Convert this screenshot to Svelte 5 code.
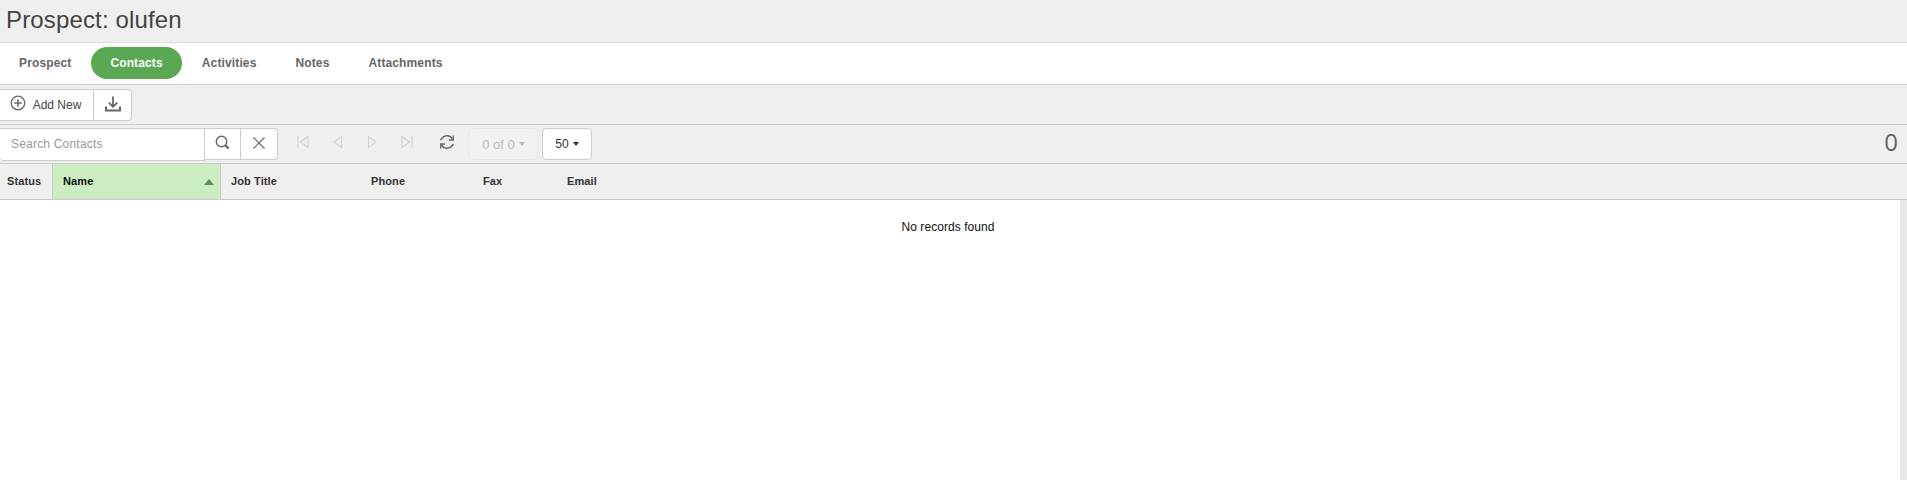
<script>
  const tabs = ['Prospect', 'Contacts', 'Activities', 'Notes', 'Attachments'];
  const cols = [
    { label: 'Status', cls: 'c-status' },
    { label: 'Name', cls: 'c-name' },
    { label: 'Job Title', cls: 'c-job' },
    { label: 'Phone', cls: 'c-phone' },
    { label: 'Fax', cls: 'c-fax' },
    { label: 'Email', cls: 'c-email' }
  ];
</script>

<div class="page">
  <header class="title"><h1>Prospect: olufen</h1></header>

  <nav class="tabs">
    {#each tabs as t}
      <span class="tab" class:active={t === 'Contacts'}>{t}</span>
    {/each}
  </nav>

  <div class="actions">
    <div class="btn-group">
      <button class="btn add">
        <svg width="16" height="16" viewBox="0 0 16 16" fill="none" stroke="#666" stroke-width="1.3"><circle cx="8" cy="8" r="6.8"/><path d="M8 4.2v7.6M4.2 8h7.6" stroke-width="1.5"/></svg>
        <span>Add New</span>
      </button>
      <button class="btn dl">
        <svg width="16" height="16" viewBox="0 0 16 16" fill="none" stroke="#666"><path d="M8 0.5v10M3.8 6.600 8 10.800l4.200-4.200" stroke-width="1.800"/><path d="M1 10.500v4h14v-4" stroke-width="2"/></svg>
      </button>
    </div>
  </div>

  <div class="pager">
    <div class="search">
      <input placeholder="Search Contacts" />
      <button class="sbtn">
        <svg width="16" height="16" viewBox="0 0 16 16" fill="none" stroke="#666"><circle cx="6.500" cy="6.500" r="5.200" stroke-width="1.400"/><path d="M10.500 10.500l3 3" stroke-width="2.400"/></svg>
      </button>
      <button class="sbtn last">
        <svg width="14" height="14" viewBox="0 0 14 14" fill="none" stroke="#666" stroke-width="1.2"><path d="M1.500 1.500l11 11M12.500 1.500l-11 11"/></svg>
      </button>
    </div>

    <div class="nav">
      <svg width="12" height="14" viewBox="0 0 12 14" fill="none" stroke="#d4d4d4" stroke-width="1.2"><path d="M1 1v12M11 1.500v11L3.500 7z"/></svg>
      <svg width="10" height="14" viewBox="0 0 10 14" fill="none" stroke="#d4d4d4" stroke-width="1.2"><path d="M8.500 1.500v11L1 7z"/></svg>
      <svg width="10" height="14" viewBox="0 0 10 14" fill="none" stroke="#d4d4d4" stroke-width="1.2"><path d="M1.500 1.500v11L9 7z"/></svg>
      <svg width="12" height="14" viewBox="0 0 12 14" fill="none" stroke="#d4d4d4" stroke-width="1.2"><path d="M11 1v12M1 1.500v11L8.500 7z"/></svg>
    </div>

    <svg class="refresh" width="16" height="16" viewBox="0 0 16 16" fill="none" stroke="#666" stroke-width="1.500"><path d="M13.500 5.500A6 6 0 0 0 3 4.200L1.500 6M2.500 10.500A6 6 0 0 0 13 11.800L14.500 10"/><path d="M14.300 1.500v4.500H10M1.700 14.500V10H6" stroke-width="1.300"/></svg>

    <button class="page-of">0 of 0 <i class="caret"></i></button>
    <button class="page-size">50 <i class="caret dark"></i></button>

    <span class="count">0</span>
  </div>

  <div class="thead">
    {#each cols as c}
      <div class="th {c.cls}">
        {c.label}
        {#if c.label === 'Name'}<i class="sort"></i>{/if}
      </div>
    {/each}
  </div>

  <div class="tbody">
    <p class="empty">No records found</p>
    <div class="scroll"></div>
  </div>
</div>

<style>
  :global(body) { margin: 0; background: #fff; }
  .page {
    font-family: "Liberation Sans", Arial, sans-serif;
    height: 480px;
    display: flex;
    flex-direction: column;
    overflow: hidden;
  }
  .title {
    height: 42px;
    background: #efefef;
    border-bottom: 1px solid #ddd;
    flex: none;
    display: flex;
    align-items: center;
  }
  h1 {
    margin: 0 0 2px 6px;
    font-size: 24px;
    font-weight: 400;
    color: #444;
    line-height: 1;
    letter-spacing: 0.15px;
  }
  .tabs {
    height: 37px;
    flex: none;
    background: #fff;
    border-bottom: 1px solid #ccc;
    display: flex;
    align-items: flex-start;
    gap: 1px;
    padding: 4px 0 0 0;
  }
  .tab {
    font-size: 12px;
    font-weight: 700;
    color: #666;
    height: 32px;
    line-height: 32px;
    padding: 0 19px;
    border-radius: 16px;
    letter-spacing: 0.13px;
  }
  .tab.active {
    background: #5ba854;
    color: #fff;
  }
  .actions {
    height: 35px;
    flex: none;
    background: #efefef;
    border-bottom: 1px solid #ccc;
    display: flex;
    align-items: flex-start;
    padding-top: 4px;
  }
  .btn-group {
    display: flex;
    height: 32px;
    background: #fff;
    border: 1px solid #ccc;
    border-left: 0;
    border-radius: 0 4px 4px 0;
    box-sizing: border-box;
  }
  .btn {
    background: none;
    border: 0;
    padding: 0;
    font: inherit;
    display: flex;
    align-items: center;
    justify-content: center;
  }
  .add {
    width: 94px;
    gap: 7px;
    padding-right: 2px;
    box-sizing: border-box;
    font-size: 12px;
    color: #444;
    border-right: 1px solid #ccc;
  }
  .add svg { margin-top: -4px; }
  .dl { width: 37px; }
  .dl svg { margin-top: -3px; }
  .pager {
    height: 38px;
    flex: none;
    background: #efefef;
    border-bottom: 1px solid #ccc;
    display: flex;
    align-items: center;
    position: relative;
  }
  .search {
    display: flex;
    align-items: flex-start;
    height: 32px;
    width: 278px;
    flex: none;
  }
  .search input {
    width: 205px;
    height: 33px;
    box-sizing: border-box;
    border: 1px solid #ccc;
    border-left: 0;
    border-radius: 0 0 0 4px;
    padding: 0 0 1px 11px;
    font: 12px "Liberation Sans", Arial, sans-serif;
    background: #fff;
    outline: none;
    letter-spacing: 0.2px;
    flex: none;
  }
  .search input::placeholder { color: #999; opacity: 1; }
  .sbtn {
    width: 36px;
    height: 32px;
    flex: none;
    background: #fff;
    border: 1px solid #ccc;
    border-left: 0;
    padding: 0;
    display: flex;
    align-items: center;
    justify-content: center;
  }
  .sbtn.last { width: 37px; border-radius: 0 4px 4px 0; }
  .sbtn svg { margin-top: -2px; }
  .nav {
    display: flex;
    align-items: center;
    margin-left: 19px;
    gap: 24px;
    height: 32px;
  }
  .nav svg { margin-top: -5px; }
  .refresh { margin: -4px 0 0 26px; }
  button.page-of, button.page-size {
    height: 32px;
    box-sizing: border-box;
    border-radius: 4px;
    padding: 0;
    display: flex;
    align-items: center;
    justify-content: center;
    gap: 4px;
  }
  button.page-of {
    font: 13px "Liberation Sans", Arial, sans-serif;
    margin-left: 14px;
    width: 69px;
    background: #f2f2f2;
    border: 1px solid #e8e8e8;
    color: #bbb;
  }
  button.page-size {
    font: 12px "Liberation Sans", Arial, sans-serif;
    margin-left: 4px;
    width: 50px;
    background: #fff;
    border: 1px solid #ccc;
    color: #333;
  }
  .caret {
    width: 0;
    height: 0;
    border-left: 3.500px solid transparent;
    border-right: 3.500px solid transparent;
    border-top: 4px solid #bbb;
    display: inline-block;
  }
  .caret.dark { border-top-color: #333; }
  .count {
    position: absolute;
    right: 9px;
    top: 2px;
    font: 24px "Open Sans", sans-serif;
    color: #666;
    line-height: 30px;
  }
  .thead {
    height: 35px;
    flex: none;
    background: #efefef;
    border-bottom: 1px solid #ccc;
    display: flex;
  }
  .th {
    font-size: 11px;
    font-weight: 700;
    color: #333;
    line-height: 34px;
    padding-left: 10px;
    box-sizing: border-box;
    position: relative;
    letter-spacing: 0.1px;
    flex: none;
  }
  .c-status { width: 52px; padding-left: 7px; }
  .c-name {
    width: 169px;
    background: #ccedc2;
    color: #111;
    border-left: 1px solid #b9d8b0;
    border-right: 1px solid #b9d8b0;
  }
  .c-job { width: 140px; }
  .c-phone { width: 112px; }
  .c-fax { width: 84px; }
  .c-email { width: 120px; }
  .sort {
    position: absolute;
    right: 6px;
    top: 15px;
    width: 0;
    height: 0;
    border-left: 5px solid transparent;
    border-right: 5px solid transparent;
    border-bottom: 6px solid #668a60;
  }
  .tbody {
    flex: 1;
    background: #fff;
    position: relative;
    display: flex;
  }
  .empty {
    margin: 0;
    width: 100%;
    padding: 20px 4px 0 0;
    text-align: center;
    font-size: 12px;
    line-height: 14px;
    color: #111;
    box-sizing: border-box;
    letter-spacing: 0.06px;
  }
  .scroll {
    width: 7px;
    flex: none;
    background: #e8e8e8;
  }
</style>
